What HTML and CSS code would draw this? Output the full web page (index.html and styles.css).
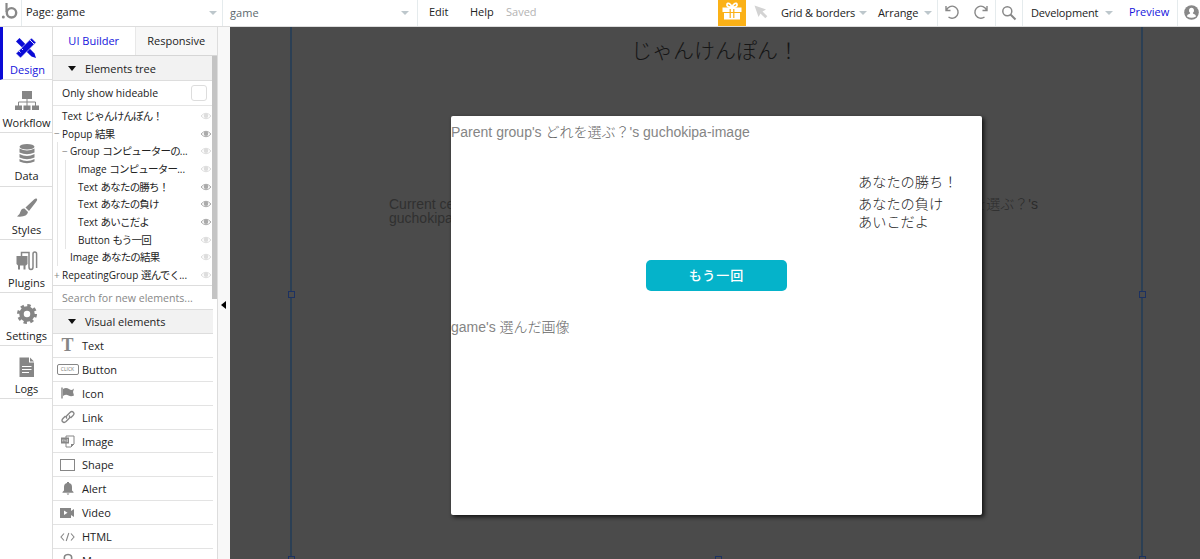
FILE: index.html
```html
<!DOCTYPE html>
<html lang="ja">
<head>
    <meta charset="UTF-8">
    <meta name="viewport" content="width=device-width, initial-scale=1.0">
    <title>game | Bubble Editor</title>
    <link rel="stylesheet" href="styles.css">
</head>
<body>

<!-- Shared icons -->
<svg class="defs">
    <symbol id="eye" viewBox="0 0 12 8">
        <path d="M1 4Q6-1.500 11 4Q6 9.500 1 4z" fill="none" stroke="currentColor"/>
        <circle cx="6" cy="3.800" r="2.300" fill="currentColor"/>
    </symbol>
    <symbol id="undo" viewBox="0 0 16 16">
        <path d="M2 2v4.500h4.500M2.500 6A6 6 0 1 1 4.500 13" fill="none" stroke="currentColor" stroke-width="1.400"/>
    </symbol>
</svg>

<header class="topbar">
    <div class="logo">
        <svg width="18" height="20" viewBox="0 0 18 20">
            <circle cx="3.300" cy="17" r="1.500" fill="#888"/>
            <path d="M6.500 3v9" stroke="#888" stroke-width="2.200"/>
            <circle cx="11.500" cy="12.800" r="4.700" fill="none" stroke="#888" stroke-width="2.400"/>
        </svg>
    </div>
    <div class="dropdown page"><span class="page-name">Page: game</span><i class="caret"></i></div>
    <div class="dropdown element"><span class="element-name">game</span><i class="caret"></i></div>
    <nav class="menu">
        <span class="edit">Edit</span>
        <span class="help">Help</span>
        <span class="saved">Saved</span>
    </nav>
    <div class="gift">
        <svg width="20" height="18" viewBox="0 0 20 18">
            <path d="M0.500 5.500h19v4.500h-19zM2 11h16v6.500H2z" fill="#fff"/>
            <path d="M10 5.500C6 5.500 4.500 4 5 2.300C5.600 0.500 8.500 0.800 10 5.500C11.500 0.800 14.400 0.500 15 2.300C15.500 4 14 5.500 10 5.500z" fill="none" stroke="#fff" stroke-width="1.700"/>
            <path d="M8.200 7v9M11.800 7v9" stroke="#fbb117" stroke-width="1.200"/>
        </svg>
    </div>
    <div class="pointer">
        <svg width="14" height="14" viewBox="0 0 14 14">
            <path d="M0.500 0.500L12 4.500L8.500 6.500L13.300 11.300L11.300 13.300L6.500 8.500L4.500 12z" fill="#d3d3d3"/>
        </svg>
    </div>
    <div class="option grid-option">Grid &amp; borders<i class="caret"></i></div>
    <div class="option arrange">Arrange<i class="caret"></i></div>
    <div class="history">
        <svg width="16" height="16"><use href="#undo"/></svg>
        <svg class="redo" width="16" height="16"><use href="#undo"/></svg>
    </div>
    <div class="search-btn">
        <svg width="16" height="16" viewBox="0 0 16 16">
            <circle cx="6.300" cy="6.300" r="4.500" fill="none" stroke="#888" stroke-width="1.500"/>
            <path d="M9.500 9.500l5 5" stroke="#888" stroke-width="2"/>
        </svg>
    </div>
    <div class="option version">Development<i class="caret"></i></div>
    <div class="preview">Preview</div>
    <div class="user">
        <svg width="15" height="15" viewBox="0 0 15 15">
            <circle cx="7.500" cy="7.500" r="7.300" fill="#888"/>
            <path d="M7.500 2.800a2.600 2.800 0 0 1 1.300 5.200c0 1.100 3.200 1 3.200 3.500q-4.500 2.500-9 0c0-2.500 3.200-2.400 3.200-3.500a2.600 2.800 0 0 1 1.300-5.200z" fill="#fff"/>
        </svg>
    </div>
</header>

<main class="editor">
    <aside class="rail">
        <div class="rail-item active">
            <svg width="22" height="22" viewBox="0 0 22 22" fill="#0a0ad6">
                <path d="M4.500 1L1 4.500L16.500 19.500L21 21L19.500 16.500z"/>
                <path d="M16.500 1L21 5.500L5.500 21L1 16.500z" stroke="#fff" stroke-width="0.600"/>
                <path d="M4 14l1.500 1.500M6.500 11.500l1.500 1.500M15 3l4 4" stroke="#fff" stroke-width="0.900"/>
            </svg>
            <span>Design</span>
        </div>
        <div class="rail-item">
            <svg width="24" height="22" viewBox="0 0 24 22" fill="#868686">
                <path d="M7 1h10v8H7zM0 15.500h7v4.500H0zM8.500 15.500h7v4.500h-7zM17 15.500h7v4.500h-7z"/>
                <path d="M12 9v7M3.500 16v-4h17v4" fill="none" stroke="#868686"/>
            </svg>
            <span class="workflow">Workflow</span>
        </div>
        <div class="rail-item">
            <svg width="18" height="22" viewBox="0 0 18 22" fill="#868686">
                <ellipse cx="9" cy="3.800" rx="7.500" ry="2.800"/>
                <path d="M1.500 5.500q7.500 4 15 0v4q-7.500 3.500-15 0zM1.500 11q7.500 4 15 0v3.500q-7.500 3.500-15 0zM1.500 16q7.500 4 15 0v2.500q-7.500 3.500-15 0z"/>
            </svg>
            <span>Data</span>
        </div>
        <div class="rail-item">
            <svg width="22" height="22" viewBox="0 0 22 22" fill="#868686">
                <path d="M20.500 1.500Q22 2.500 20 5L13 14L9.500 10.500L18 2.500Q19.500 1 20.500 1.500zM8.500 11.500L12 15Q11 20.500 1 19.500Q4 17.500 4.500 14.500Q5.500 11 8.500 11.500z"/>
            </svg>
            <span>Styles</span>
        </div>
        <div class="rail-item">
            <svg width="22" height="22" viewBox="0 0 22 22">
                <path d="M0.500 6h11v8l-1.500 1.500H2L0.500 14z" fill="#868686"/>
                <path d="M3 15v4.500M8.500 15v4.500" stroke="#868686" stroke-width="2"/>
                <path d="M5.500 7V2.500H13V17q0 2.500 2 2.500t2-2.500V4q0-2 1.800-2t1.800 2v14" fill="none" stroke="#868686" stroke-width="1.500"/>
            </svg>
            <span>Plugins</span>
        </div>
        <div class="rail-item">
            <svg width="22" height="22" viewBox="0 0 22 22">
                <circle cx="11" cy="11" r="5.500" fill="none" stroke="#868686" stroke-width="4.500"/>
                <circle cx="11" cy="11" r="8.500" fill="none" stroke="#868686" stroke-width="3" stroke-dasharray="3.340 3.340"/>
            </svg>
            <span>Settings</span>
        </div>
        <div class="rail-item">
            <svg width="18" height="22" viewBox="0 0 18 22">
                <path d="M1.500 1.500h9.500v5h5V21H1.500zM12 1.500l4 4h-4z" fill="#868686"/>
                <path d="M4 10.500h9.500M4 13.500h9.500M4 16.500h7" stroke="#fff"/>
            </svg>
            <span>Logs</span>
        </div>
    </aside>

    <section class="panel">
        <div class="tabs">
            <div class="tab selected">UI Builder</div>
            <div class="tab">Responsive</div>
        </div>
        <div class="panel-body">
            <div class="section-head"><i class="arrow"></i>Elements tree</div>
            <div class="hideable"><span>Only show hideable</span><i class="checkbox"></i></div>

            <div class="tree">
                <div class="node"><span class="label">Text <b>じゃんけんぽん！</b></span><svg class="eye"><use href="#eye"/></svg></div>
                <div class="node shown"><i class="toggle">−</i><span class="label">Popup <b>結果</b></span><svg class="eye"><use href="#eye"/></svg></div>
                <div class="children">
                    <div class="node"><i class="toggle">−</i><span class="label">Group <b>コンピューターの</b>...</span><svg class="eye"><use href="#eye"/></svg></div>
                    <div class="children">
                        <div class="node"><span class="label">Image <b>コンピューター</b>...</span><svg class="eye"><use href="#eye"/></svg></div>
                        <div class="node shown"><span class="label">Text <b>あなたの勝ち！</b></span><svg class="eye"><use href="#eye"/></svg></div>
                        <div class="node shown"><span class="label">Text <b>あなたの負け</b></span><svg class="eye"><use href="#eye"/></svg></div>
                        <div class="node shown"><span class="label">Text <b>あいこだよ</b></span><svg class="eye"><use href="#eye"/></svg></div>
                        <div class="node"><span class="label">Button <b>もう一回</b></span><svg class="eye"><use href="#eye"/></svg></div>
                    </div>
                    <div class="node"><span class="label">Image <b>あなたの結果</b></span><svg class="eye"><use href="#eye"/></svg></div>
                </div>
                <div class="node"><i class="toggle">+</i><span class="label">RepeatingGroup <b>選んでく</b>...</span><svg class="eye"><use href="#eye"/></svg></div>
            </div>

            <div class="search">Search for new elements...</div>
            <div class="section-head visual"><i class="arrow"></i>Visual elements</div>

            <div class="palette">
                <div class="item"><span class="ico"><i class="t-icon">T</i></span>Text</div>
                <div class="item"><span class="ico"><i class="click-icon">CLICK</i></span>Button</div>
                <div class="item"><span class="ico"><svg width="14" height="12" viewBox="0 0 14 12"><path d="M1 0.500v11" stroke="#868686" stroke-width="1.400"/><path d="M2 2q3-2 6 0t5-0.500l-1 3.500l1 3.500q-3 1.500-5.500 0T2 9z" fill="#868686"/></svg></span>Icon</div>
                <div class="item"><span class="ico"><svg width="14" height="14" viewBox="0 0 14 14" fill="none" stroke="#868686" stroke-width="1.400"><path d="M6 8.500Q4.500 7 6 5.500L9 2.500Q10.800 0.800 12.300 2.200T12 5.500L9.500 8M8 5.500Q9.500 7 8 8.500L5 11.500Q3.200 13.200 1.700 11.800T2 8.500L4.500 6"/></svg></span>Link</div>
                <div class="item"><span class="ico"><svg width="14" height="13" viewBox="0 0 14 13"><path d="M5 1h8v8l-3 3H5z" fill="#fff" stroke="#868686"/><path d="M0 2.500h8v6H0zM10 9h3l-3 3z" fill="#868686"/><path d="M1.500 4.500v2M3 6.500v-2l2 2v-2M6.500 4v3" fill="none" stroke="#ddd" stroke-width="0.700"/></svg></span>Image</div>
                <div class="item"><span class="ico"><i class="shape-icon"></i></span>Shape</div>
                <div class="item"><span class="ico"><svg width="12" height="13" viewBox="0 0 12 13"><path d="M5 0h2v1q3 0.500 3 4v3.500l1.500 1.500v0.700H0.500V10L2 8.500V5q0-3.500 3-4zM4.500 11.500h3L6 13z" fill="#868686"/></svg></span>Alert</div>
                <div class="item"><span class="ico"><svg width="15" height="12" viewBox="0 0 15 12"><path d="M0 1h11v3l3-2v8l-3-2v3H0z" fill="#868686"/><path d="M4 3.500v4.500l3.500-2.200z" fill="#fff"/></svg></span>Video</div>
                <div class="item"><span class="ico"><svg width="15" height="10" viewBox="0 0 15 10"><path d="M4 1.500L1 5l3 3.500M11 1.500L14 5l-3 3.500M8.800 1L6.200 9" fill="none" stroke="#868686" stroke-width="1.100"/></svg></span>HTML</div>
                <div class="item"><span class="ico"><svg width="10" height="14" viewBox="0 0 10 14"><path d="M5 13L1.500 6.500Q0.500 1.500 5 1.500T8.500 6.500z" fill="none" stroke="#868686" stroke-width="1.600"/></svg></span>Map</div>
            </div>
            <div class="scrollbar"></div>
        </div>
    </section>
    <div class="collapse"><i></i></div>

    <section class="canvas">
        <div class="page-frame">
            <i class="handle left"></i>
            <i class="handle right"></i>
            <i class="handle bottom-left"></i>
            <i class="handle bottom"></i>
            <i class="handle bottom-right"></i>
        </div>
        <h1 class="page-title">じゃんけんぽん！</h1>
        <p class="cell-start">Current cell's<br>guchokipa-image</p>
        <p class="cell-end">を選ぶ？<em>'s</em></p>
        <div class="popup">
            <p class="parent-image"><span>Parent group's</span> どれを選ぶ？<span>'s guchokipa-image</span></p>
            <p class="result win">あなたの勝ち！</p>
            <p class="result lose">あなたの負け</p>
            <p class="result draw">あいこだよ</p>
            <div class="again">もう一回</div>
            <p class="chosen-image"><span>game's</span> 選んだ画像</p>
        </div>
    </section>
</main>

</body>
</html>
```
FILE: styles.css
```css
* {
    box-sizing: border-box;
}

body {
    margin: 0;
    height: 559px;
    overflow: hidden;
    background-color: #fff;
    color: #222;
    font-family: 'Open Sans', 'Noto Sans CJK JP', sans-serif;
    font-size: 11px;
}

i, em {
    font-style: normal;
}

p, h1 {
    margin: 0;
}

svg {
    display: block;
    flex: none;
}

.defs {
    position: absolute;
    width: 0;
    height: 0;
}

/* Top bar */
.topbar {
    display: flex;
    height: 27px;
    border-bottom: 1px solid #ddd;
    line-height: 24px;
    white-space: nowrap;
}

.logo {
    width: 22px;
    border-right: 1px solid #e5ebed;
}

.caret {
    display: block;
    width: 0;
    border: 4px solid transparent;
    border-top: 4px solid #bdc7cc;
    border-bottom: 0;
}

.dropdown {
    display: flex;
    align-items: center;
    justify-content: space-between;
    border-right: 1px solid #e5ebed;
}

.page {
    width: 201px;
    padding: 0 5px 0 4px;
}

.page-name {
    margin-top: -2px;
}

.element {
    width: 195px;
    padding: 0 8px 0 7px;
    color: #5c696e;
}

.element-name {
    letter-spacing: 0.1px;
}

.menu {
    display: flex;
    width: 300px;
    flex: none;
    padding-left: 11px;
}

.edit {
    width: 41px;
}

.help {
    width: 36px;
}

.saved {
    color: #b3b3b3;
}

.gift {
    width: 28px;
    flex: none;
    padding: 2px 4px;
    background-color: #fbb117;
}

.pointer {
    width: 35px;
    flex: none;
    padding: 5px 0 0 8px;
}

.option {
    display: flex;
    align-items: center;
    justify-content: space-between;
    flex: none;
}

.page, .element, .logo, .history, .search-btn, .preview {
    flex: none;
}

.grid-option {
    width: 86px;
    letter-spacing: -0.150px;
}

.arrange {
    width: 54px;
    margin-left: 11px;
    letter-spacing: -0.100px;
}

.history {
    display: flex;
    gap: 13px;
    width: 59px;
    margin-left: 5px;
    padding: 4px 0 0 6px;
    border-left: 1px solid #e5ebed;
    border-right: 1px solid #e5ebed;
    color: #888;
}

.redo {
    transform: scaleX(-1);
}

.search-btn {
    width: 27px;
    padding: 5px 0 0 5px;
    border-right: 1px solid #e5ebed;
}

.version {
    width: 90px;
    padding-left: 8px;
    letter-spacing: -0.150px;
}

.preview {
    width: 65px;
    padding-left: 16px;
    border-right: 1px solid #e5ebed;
    color: #1414dc;
}

.user {
    padding: 5px 0 0 6px;
}

/* Editor layout */
.editor {
    display: flex;
    height: 532px;
}

.rail {
    width: 53px;
    flex: none;
    border-right: 1px solid #ddd;
}

.rail-item {
    display: flex;
    flex-direction: column;
    align-items: center;
    height: 53.200px;
    padding-top: 10px;
    padding-left: 1px;
    border-bottom: 1px solid #ddd;
    line-height: 22px;
}

.rail-item.active {
    padding-left: 0;
    border-left: 3px solid #0a0ad6;
    color: #1414dc;
}

.rail-item.active svg {
    margin-right: 3px;
}

.workflow {
    letter-spacing: -0.1px;
}

.panel {
    display: flex;
    flex-direction: column;
    width: 165px;
    flex: none;
    border-right: 1px solid #ddd;
}

.tabs {
    display: flex;
    height: 29px;
    flex: none;
    border-bottom: 1px solid #d6d6d6;
    line-height: 28px;
    text-align: center;
}

.tab {
    flex: 1;
    background-color: #f7f7f7;
    border-left: 1px solid #e8e8e8;
}

.tab.selected {
    background-color: #fff;
    border-left: 0;
    color: #1414dc;
}

.panel-body {
    position: relative;
    height: 503px;
    padding-right: 4px;
    overflow: hidden;
}

/* Lies over the right edge of the list */
.scrollbar {
    position: absolute;
    top: 0;
    right: 0;
    width: 5px;
    height: 243px;
    background-color: #c4c4c4;
}

.section-head {
    display: flex;
    align-items: center;
    height: 25px;
    padding-left: 15px;
    background-color: #f2f2f2;
    border-bottom: 1px solid #ddd;
}

.section-head.visual {
    height: 24px;
}

.section-head .arrow {
    margin-right: 9px;
    border: 4px solid transparent;
    border-top: 5px solid #111;
    border-bottom: 0;
}

.hideable {
    display: flex;
    align-items: center;
    justify-content: space-between;
    height: 25px;
    padding: 0 6px 0 9px;
    border-bottom: 1px solid #e5e5e5;
    font-size: 10.500px;
}

.checkbox {
    width: 16px;
    height: 16px;
    border: 1px solid #ddd;
    border-radius: 3px;
}

.tree {
    height: 180px;
    padding: 1px 1px 0 9px;
    border-bottom: 1px solid #ddd;
    font-size: 10px;
}

.node {
    display: flex;
    align-items: center;
    height: 17.700px;
    line-height: 17px;
    white-space: nowrap;
}

.node .label {
    flex: 1;
}

.node b {
    font-family: 'Noto Sans CJK JP', sans-serif;
    font-weight: 400;
    font-size: 10.500px;
    letter-spacing: -0.800px;
}

.node .eye {
    width: 12px;
    height: 8px;
    color: #ddd;
}

.node.shown .eye {
    color: #aaa;
}

.toggle {
    width: 8px;
    margin-left: -8px;
    color: #888;
    font-size: 10px;
}

.children {
    margin-left: -5px;
    padding-left: 12px;
    border-left: 1px solid #e5e5e5;
}

.search {
    height: 24px;
    padding-left: 9px;
    border-bottom: 1px solid #ddd;
    color: #888;
    font-size: 10.600px;
    line-height: 25px;
}

.item {
    display: flex;
    align-items: center;
    height: 23.900px;
    border-bottom: 1px solid #e3e3e3;
}

.ico {
    display: flex;
    justify-content: center;
    width: 29px;
}

.t-icon {
    color: #868686;
    font: bold 18px/20px 'Liberation Serif', serif;
}

.click-icon {
    width: 22px;
    height: 11px;
    border: 1px solid #868686;
    border-radius: 2px;
    color: #777;
    font-size: 5px;
    line-height: 9px;
    text-align: center;
}

.shape-icon {
    width: 15px;
    height: 12px;
    border: 1px solid #868686;
}

.collapse {
    display: flex;
    align-items: center;
    width: 12px;
    flex: none;
    padding: 24px 0 0 3px;
    background-color: #f8f8f8;
}

.collapse i {
    border: 4px solid transparent;
    border-right: 5px solid #000;
    border-left: 0;
}

/* Canvas: everything here is placed freely */
.canvas {
    position: relative;
    flex: 1;
    overflow: hidden;
    background-color: #4b4b4b;
    font-family: 'Liberation Sans', 'Noto Sans CJK JP', sans-serif;
    font-weight: 300;
}

.canvas p, .canvas h1 {
    position: absolute;
    white-space: nowrap;
}

.page-frame {
    position: absolute;
    top: 0;
    left: 60px;
    width: 853px;
    height: 532px;
    border: solid #2b3f54;
    border-width: 0 2px;
}

.handle {
    position: absolute;
    width: 7px;
    height: 7px;
    border: 1px solid #1c3161;
    background-color: #4b4b4b;
}

.left {
    left: -4px;
    top: 264px;
}

.right {
    right: -5px;
    top: 264px;
}

.bottom-left {
    left: -4px;
    top: 529px;
}

.bottom {
    left: 423px;
    top: 529px;
}

.bottom-right {
    right: -5px;
    top: 529px;
}

.page-title {
    left: 401px;
    top: 9px;
    color: #151515;
    font-size: 21px;
    font-weight: 300;
    line-height: 30px;
}

.cell-start {
    left: 159px;
    top: 170px;
    color: #303030;
    font-size: 14px;
    line-height: 14px;
}

.cell-end {
    right: 162px;
    top: 170px;
    color: #2b2b2b;
    font-size: 14px;
    line-height: 14px;
}

.popup {
    position: absolute;
    left: 221px;
    top: 89px;
    width: 531px;
    height: 399px;
    border-radius: 2px;
    background-color: #fff;
    box-shadow: 2px 2px 4px #111;
}

.parent-image, .chosen-image {
    left: 0;
    color: #666;
    font-size: 14px;
    line-height: 18px;
}

.parent-image span, .chosen-image span {
    color: #858585;
}

.parent-image {
    top: 7px;
}

.chosen-image {
    top: 202px;
}

.result {
    left: 407px;
    color: #222;
    font-size: 14.200px;
    line-height: 18px;
}

.win {
    top: 57px;
}

.lose {
    top: 79px;
}

.draw {
    top: 97px;
}

.again {
    position: absolute;
    left: 195px;
    top: 144px;
    width: 141px;
    height: 31px;
    border-radius: 5px;
    background-color: #05b3ca;
    color: #fff;
    font-size: 13px;
    font-weight: 500;
    letter-spacing: 1px;
    line-height: 31px;
    text-align: center;
}
```
